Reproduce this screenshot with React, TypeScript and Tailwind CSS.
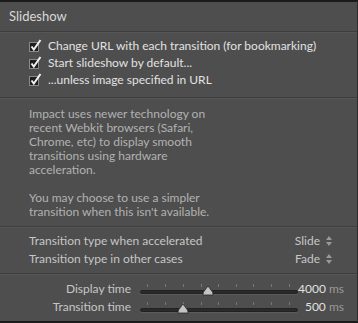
import React from "react";

const font = { fontFamily: "Lato, 'Open Sans', sans-serif" };

function Check() {
  return (
    <svg width="13" height="13" viewBox="0 0 13 13" className="shrink-0">
      <rect x="0.5" y="3.5" width="9" height="9" fill="#1e1e1e" stroke="#8a8a8a" />
      <path d="M2.5 7.5 L4.8 10.5 L11.5 1" fill="none" stroke="#f0f0f0" strokeWidth="2" />
    </svg>
  );
}

function UpDown() {
  return (
    <svg width="6" height="10" viewBox="0 0 6 10" className="ml-1.5">
      <path d="M0 4 L3 0 L6 4 Z" fill="#9a9a9a" />
      <path d="M0 6 L3 10 L6 6 Z" fill="#9a9a9a" />
    </svg>
  );
}

function Slider({ pos }: { pos: number }) {
  const ticks = [7, 25, 43, 61, 78, 96, 113, 131, 149];
  return (
    <div className="relative w-[158px] h-[14px] shrink-0">
      {ticks.map((t) => (
        <div key={t} className="absolute top-[2px] w-px h-[3px] bg-[#777]" style={{ left: t }} />
      ))}
      <div className="absolute left-0 right-0 top-[8px] h-[4px] rounded-full bg-[#2a2a2a] border border-[#222] shadow-[0_1px_0_#5c5c5c]" />
      <svg width="12" height="10" viewBox="0 0 12 10" className="absolute top-[4px]" style={{ left: pos - 6 }}>
        <path d="M6 0 L9 4 Q11 6 11 8 L11 9 L1 9 L1 8 Q1 6 3 4 Z" fill="#c4c4c4" stroke="#2a2a2a" strokeWidth="0.8" />
      </svg>
    </div>
  );
}

function Divider() {
  return <div className="h-px bg-[#3d3d3d] shadow-[0_1px_0_#565656]" />;
}

export default function App() {
  return (
    <div className="w-[358px] h-[323px] bg-[#4e4e4e] border-t-2 border-b-2 border-[#1b1b1b] border-r border-r-[#2e2e2e] text-[12px] overflow-hidden" style={font}>
      <div className="h-[29px] flex items-center px-[9px] text-[13px] text-[#d8d8d8]">Slideshow</div>
      <Divider />
      <div className="pl-[29px] pt-[5px] h-[65px] flex flex-col text-[#e2e2e2] text-[12px]">
        <label className="flex items-center gap-[6px] h-[17px]"><Check />Change URL with each transition (for bookmarking)</label>
        <label className="flex items-center gap-[6px] h-[17px]"><Check />Start slideshow by default...</label>
        <label className="flex items-center gap-[6px] h-[17px]"><Check />...unless image specified in URL</label>
      </div>
      <Divider />
      <div className="h-[128px] pl-[29px] pt-[9px] text-[#b2b2b2] leading-[14px] text-[12px]">
        <p className="w-[200px]">Impact uses newer technology on recent Webkit browsers (Safari, Chrome, etc) to display smooth transitions using hardware acceleration.</p>
        <p className="w-[200px] mt-[14px]">You may choose to use a simpler transition when this isn't available.</p>
      </div>
      <Divider />
      <div className="h-[46px] pl-[29px] pr-[25px] pt-[5px] text-[#c6c6c6] text-[12px]">
        <div className="flex items-center justify-between h-[18px]">
          <span>Transition type when accelerated</span>
          <span className="flex items-center">Slide<UpDown /></span>
        </div>
        <div className="flex items-center justify-between h-[18px]">
          <span>Transition type in other cases</span>
          <span className="flex items-center">Fade<UpDown /></span>
        </div>
      </div>
      <Divider />
      <div className="pt-[6px] text-[#c6c6c6] text-[12px]">
        {[
          { label: "Display time", pos: 68, val: "4000" },
          { label: "Transition time", pos: 43, val: "500" },
        ].map((r) => (
          <div key={r.label} className="flex items-center h-[18px]">
            <span className="w-[131px] text-right whitespace-nowrap">{r.label}</span>
            <div className="ml-[9px]"><Slider pos={r.pos} /></div>
            <span className="flex-1 pr-[13px] text-right whitespace-nowrap text-[#e0e0e0]">{r.val} <span className="text-[#9a9a9a]">ms</span></span>
          </div>
        ))}
      </div>
    </div>
  );
}
